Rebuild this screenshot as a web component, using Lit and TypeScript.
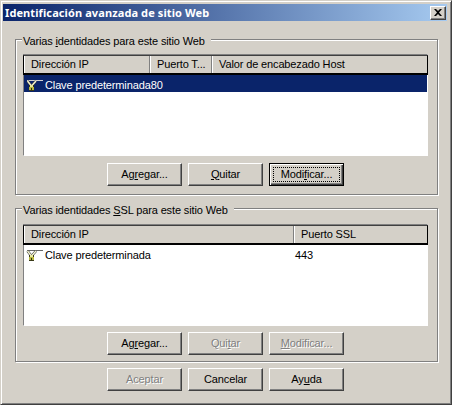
import { LitElement, html, css, svg } from "lit";
import { customElement } from "lit/decorators.js";

const keyIcon = (sel: boolean) => svg`<svg class="ico" width="17" height="17" viewBox="0 0 17 17">
  <path d="M1 5.500h16" stroke="${sel ? "#d0d0d0" : "#666"}" stroke-width="1" fill="none"/>
  <path d="M1.500 6l3.500 4.500M10 6L6 10.500" stroke="#333" stroke-width="2.600" fill="none"/>
  <path d="M1.500 6l3.500 4.500M10 6L6 10.500" stroke="#f2f2d0" stroke-width="1.500" fill="none"/>
  <rect x="3" y="10" width="5" height="6" fill="#3a3a18"/>
  <rect x="4" y="10" width="3" height="2" fill="#e8e8a0"/>
  <rect x="3" y="12" width="5" height="3" fill="#b8b840"/>
  <rect x="5" y="13" width="1" height="2" fill="#2a2a10"/>
</svg>`;

@customElement("app-root")
export class AppRoot extends LitElement {
  static styles = css`
    :host {
      display: block;
      width: 452px;
      height: 405px;
      font-family: "Liberation Sans", sans-serif;
      font-size: 11px;
      letter-spacing: -0.13px;
      color: #000;
      overflow: hidden;
    }
    .win {
      box-sizing: border-box;
      width: 452px;
      height: 405px;
      background: #d4d0c8;
      border: 1px solid;
      border-color: #d4d0c8 #404040 #404040 #d4d0c8;
      box-shadow: inset 1px 1px 0 #fff, inset -1px -1px 0 #808080;
      padding: 3px 4px 0 2px;
      display: flex;
      flex-direction: column;
    }
    .title {
      height: 17px;
      flex: none;
      background: linear-gradient(90deg, #0a246a, #a6caf0);
      color: #fff;
      font-family: "Noto Sans", sans-serif;
      font-weight: bold;
      font-size: 11px;
      letter-spacing: 0.1px;
      line-height: 17px;
      display: flex;
      align-items: center;
      justify-content: space-between;
      padding: 0 1px 0 2px;
    }
    .close {
      box-sizing: border-box;
      width: 16px;
      height: 14px;
      background: #d4d0c8;
      border: 1px solid;
      border-color: #fff #404040 #404040 #fff;
      box-shadow: inset -1px -1px 0 #808080;
      display: flex;
      align-items: center;
      justify-content: center;
    }
    .body {
      padding: 18px 9px 0 12px;
      display: flex;
      flex-direction: column;
    }
    .group {
      position: relative;
      box-sizing: border-box;
      border: 1px solid #808080;
      box-shadow: 1px 1px 0 #fff, inset 1px 1px 0 #fff;
      padding: 14px 9px 8px 7px;
    }
    .group.two {
      margin-top: 13px;
      padding: 15px 9px 6px 7px;
    }
    .legend {
      position: absolute;
      top: -7px;
      left: 6px;
      background: #d4d0c8;
      padding: 0 6px 0 1px;
      line-height: 16px;
      white-space: nowrap;
    }
    .list {
      box-sizing: border-box;
      height: 102px;
      background: #fff;
      border: 1px solid;
      border-color: #808080 #fff #fff #808080;
      display: flex;
      flex-direction: column;
    }
    .head {
      display: flex;
      height: 20px;
      flex: none;
      background: #d4d0c8;
      border: 1px solid #000;
      border-top-color: #404040;
      border-bottom-width: 2px;
      box-sizing: border-box;
      margin: 0 -1px;
    }
    .hc {
      box-sizing: border-box;
      padding-left: 7px;
      line-height: 17px;
      border-right: 1px solid #808080;
      box-shadow: inset 1px 0 0 #fff;
      white-space: nowrap;
      overflow: hidden;
    }
    .hc:last-child { border-right: 0; flex: 1; }
    .row {
      display: flex;
      align-items: center;
      height: 17px;
      flex: none;
    }
    .row.sel { background: #0a246a; color: #fff; }
    .ico { flex: none; margin-left: 2px; }
    .name { margin-left: 2px; padding-top: 2px; white-space: nowrap; }
    .port { padding-top: 2px; }
    .two .name { width: 250px; }
    .btns {
      display: flex;
      gap: 6px;
      padding-left: 84px;
      margin-top: 7px;
    }
    .two .btns { margin-top: 6px; }
    .b {
      box-sizing: border-box;
      width: 75px;
      height: 23px;
      flex: none;
      background: #d4d0c8;
      border: 1px solid;
      border-color: #fff #404040 #404040 #fff;
      box-shadow: inset -1px -1px 0 #808080;
      display: flex;
      align-items: center;
      justify-content: center;
      line-height: 1;
      white-space: nowrap;
      padding-bottom: 1px;
    }
    .b.def {
      border: 1px solid #000;
      box-shadow: inset 1px 1px 0 #fff, inset -1px -1px 0 #404040, inset -2px -2px 0 #808080;
      position: relative;
    }
    .b.def::after {
      content: "";
      position: absolute;
      inset: 3px;
      border: 1px dotted #000;
    }
    .b.dis { color: #808080; text-shadow: 1px 1px 0 #fff; }
    .b u { text-underline-offset: 1px; }
    .footer {
      display: flex;
      gap: 6px;
      padding-left: 92px;
      margin-top: 6px;
    }
  `;

  render() {
    return html`<div class="win">
      <div class="title">
        <span>Identificación avanzada de sitio Web</span>
        <span class="close">
          <svg width="8" height="7" viewBox="0 0 8 7"><path d="M0 0l2 0 2 2 2-2 2 0-3 3.500 3 3.500-2 0-2-2-2 2-2 0 3-3.500z" fill="#000"/></svg>
        </span>
      </div>
      <div class="body">
        <div class="group one">
          <span class="legend">Varias <u>i</u>dentidades para este sitio Web</span>
          <div class="list">
            <div class="head">
              <div class="hc" style="width:126px">Dirección IP</div>
              <div class="hc" style="width:62px">Puerto T...</div>
              <div class="hc">Valor de encabezado Host</div>
            </div>
            <div class="row sel">${keyIcon(true)}<span class="name">Clave predeterminada</span><span class="port">80</span></div>
          </div>
          <div class="btns">
            <div class="b">Ag<u>r</u>egar...</div>
            <div class="b"><u>Q</u>uitar</div>
            <div class="b def">Modi<u>f</u>icar...</div>
          </div>
        </div>
        <div class="group two">
          <span class="legend">Varias identidades <u>S</u>SL para este sitio Web</span>
          <div class="list">
            <div class="head">
              <div class="hc" style="width:270px">Dirección IP</div>
              <div class="hc">Puerto SSL</div>
            </div>
            <div class="row">${keyIcon(false)}<span class="name">Clave predeterminada</span><span class="port">443</span></div>
          </div>
          <div class="btns">
            <div class="b">Ag<u>r</u>egar...</div>
            <div class="b dis">Qui<u>t</u>ar</div>
            <div class="b dis"><u>M</u>odificar...</div>
          </div>
        </div>
        <div class="footer">
          <div class="b dis">Aceptar</div>
          <div class="b">Cancelar</div>
          <div class="b">Ay<u>u</u>da</div>
        </div>
      </div>
    </div>`;
  }
}
